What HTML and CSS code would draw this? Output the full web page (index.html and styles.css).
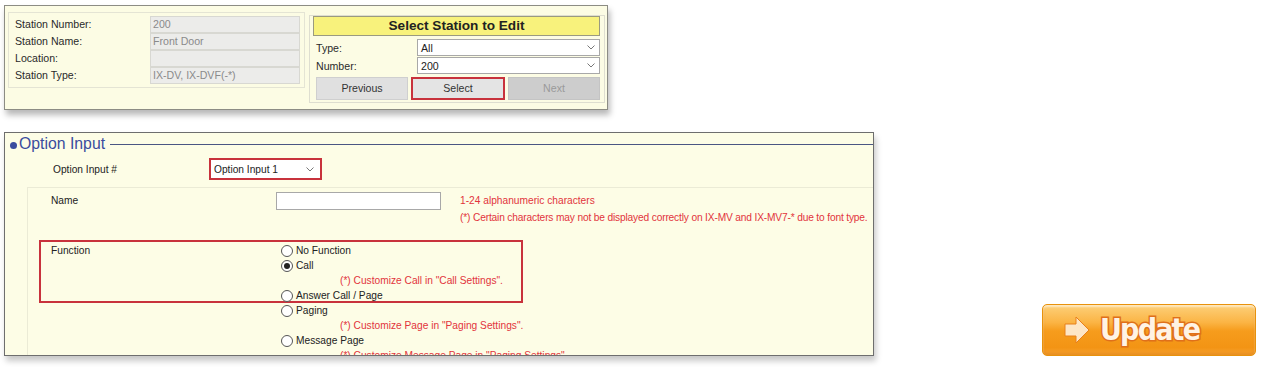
FILE: index.html
```html
<!DOCTYPE html>
<html lang="en">
<head>
<meta charset="utf-8">
<title>Option Input</title>
<link rel="stylesheet" href="styles.css">
</head>
<body>
<div class="page">
  <div class="left-col">
    <section class="station-panel">
      <div class="info-box">
        <div class="info-label">Station Number:</div><div class="info-field">200</div>
        <div class="info-label">Station Name:</div><div class="info-field">Front Door</div>
        <div class="info-label">Location:</div><div class="info-field"></div>
        <div class="info-label">Station Type:</div><div class="info-field">IX-DV, IX-DVF(-*)</div>
      </div>
      <div class="select-box">
        <div class="select-header">Select Station to Edit</div>
        <div class="sel-row first">
          <span class="sel-label">Type:</span>
          <div class="dropdown"><span>All</span><svg class="chev" viewBox="0 0 8 5"><polyline points="0.5,0.5 4,4 7.5,0.5"/></svg></div>
        </div>
        <div class="sel-row">
          <span class="sel-label">Number:</span>
          <div class="dropdown"><span>200</span><svg class="chev" viewBox="0 0 8 5"><polyline points="0.5,0.5 4,4 7.5,0.5"/></svg></div>
        </div>
        <div class="btn-row">
          <div class="btn">Previous</div>
          <div class="btn btn-active">Select</div>
          <div class="btn btn-disabled">Next</div>
        </div>
      </div>
    </section>

    <section class="option-panel">
      <div class="title-row">
        <span class="bullet"></span><span class="title-text">Option Input</span><span class="title-line"></span>
      </div>
      <div class="opt-row">
        <span class="opt-label">Option Input #</span>
        <div class="opt-select"><span>Option Input 1</span><svg class="chev" viewBox="0 0 8 5"><polyline points="0.5,0.5 4,4 7.5,0.5"/></svg></div>
      </div>
      <div class="inner-box">
        <div class="name-row">
          <span class="field-label">Name</span>
          <div class="text-input"></div>
          <div class="notes">
            <div>1-24 alphanumeric characters</div>
            <div class="note-long">(*) Certain characters may not be displayed correctly on IX-MV and IX-MV7-* due to font type.</div>
          </div>
        </div>
        <div class="function-box">
          <span class="fn-label">Function</span>
          <div class="radio-list">
            <div class="radio-item"><span class="radio"></span>No Function</div>
            <div class="radio-item"><span class="radio checked"></span>Call</div>
            <div class="radio-note">(*) Customize Call in "Call Settings".</div>
            <div class="radio-item"><span class="radio"></span>Answer Call / Page</div>
          </div>
        </div>
        <div class="radio-list more">
          <div class="radio-item"><span class="radio"></span>Paging</div>
          <div class="radio-note">(*) Customize Page in "Paging Settings".</div>
          <div class="radio-item"><span class="radio"></span>Message Page</div>
          <div class="radio-note">(*) Customize Message Page in "Paging Settings".</div>
        </div>
      </div>
    </section>
  </div>

  <div class="update-wrap">
    <div class="update-btn">
      <svg class="arrow" viewBox="0 0 28 28"><polygon points="2,8 13,8 13,1 26,14 13,27 13,20 2,20"/></svg>
      <span class="update-text">Update</span>
    </div>
  </div>
</div>
</body>
</html>
```

FILE: styles.css
```css
* { box-sizing: border-box; }
html, body { margin: 0; padding: 0; background: #ffffff; }
body {
  font-family: "Liberation Sans", Arial, sans-serif;
  font-size: 10.6px;
  color: #333;
  width: 1266px;
  height: 367px;
  overflow: hidden;
}
.page { display: flex; height: 367px; }
.left-col { display: flex; flex-direction: column; padding: 5px 0 0 4px; width: 880px; flex-shrink: 0; }

/* Station panel */
.station-panel {
  width: 604px;
  height: 105px;
  border: 1px solid #8c8c84;
  background: #fcfce4;
  box-shadow: 2px 5px 6px rgba(0,0,0,0.28);
  display: flex;
  align-items: flex-start;
  gap: 4px;
  padding: 6px 0 0 3px;
}
.info-box {
  width: 297px;
  height: 76px;
  border: 1px solid #e4e4d4;
  padding: 3px 4px 0 6px;
  display: grid;
  grid-template-columns: 135px 150px;
  grid-auto-rows: 17px;
}
.info-label { line-height: 17px; color: #2a2a2a; }
.info-field {
  background: #ececea;
  border: 1px solid #d8d8d2;
  color: #8a8a8a;
  line-height: 15px;
  padding-left: 2px;
}
.select-box {
  width: 296px;
  height: 88px;
  margin-top: 3px;
  border: 1px solid #deded0;
  padding: 0 4px 0 3px;
}
.select-header {
  height: 20px;
  border: 1px solid #9a9a80;
  background: #f8f27c;
  text-align: center;
  font-weight: bold;
  font-size: 13.6px;
  line-height: 18px;
  color: #222;
}
.sel-row { display: flex; align-items: center; height: 17px; margin-top: 1px; }
.sel-row.first { margin-top: 3px; }
.sel-label { width: 104px; padding-left: 3px; color: #2a2a2a; }
.dropdown {
  flex: 1;
  height: 17px;
  border: 1px solid #a8a8a8;
  background: #fff;
  display: flex;
  align-items: center;
  justify-content: space-between;
  padding: 0 4px 0 3px;
  color: #222;
}
.chev { width: 8px; height: 5px; }
.chev polyline { fill: none; stroke: #777; stroke-width: 1; }
.btn-row { display: flex; gap: 3px; margin: 3px 0 0 3px; }
.btn {
  flex: 1;
  height: 23px;
  background: #e0e0e0;
  border: 1px solid #cfcfcf;
  text-align: center;
  line-height: 21px;
  color: #333;
}
.btn-active { border: 2px solid #c8323c; line-height: 19px; background: #e4e4e4; }
.btn-disabled { background: #cdcdcd; color: #9a9a9a; border-color: #c4c4c4; }

/* Option panel */
.option-panel {
  margin-top: 22px;
  width: 870px;
  height: 224px;
  border: 1px solid #6e6e6e;
  background: #fdfde6;
  box-shadow: 2px 5px 6px rgba(0,0,0,0.22);
  overflow: hidden;
  padding: 0 0 0 5px;
  font-size: 10.2px;
}
.title-row { display: flex; align-items: center; height: 20px; margin-top: 1px; }
.bullet { width: 7px; height: 7px; border-radius: 50%; background: #3a4c9e; margin: 2px 2px 0 0; flex-shrink: 0; }
.title-text { font-size: 15.8px; color: #3a4c9e; line-height: 20px; }
.title-line { flex: 1; border-top: 1px solid #4a5683; margin-left: 5px; }
.opt-row { display: flex; align-items: center; margin-top: 4px; height: 22px; }
.opt-label { width: 199px; padding-left: 43px; color: #222; flex-shrink: 0; }
.opt-select {
  width: 113px;
  height: 22px;
  border: 2px solid #c8323c;
  background: #fff;
  display: flex;
  align-items: center;
  justify-content: space-between;
  padding: 0 6px 0 3px;
  color: #222;
}
.inner-box {
  margin: 7px 0 0 17px;
  border-top: 1px solid #ebebd6;
  border-left: 1px solid #ebebd6;
  height: 200px;
}
.name-row { display: flex; align-items: flex-start; padding-top: 4px; }
.field-label { width: 248px; flex-shrink: 0; padding-left: 23px; line-height: 18px; color: #222; }
.text-input { width: 165px; height: 18px; flex-shrink: 0; border: 1px solid #a8a8a8; background: #fff; }
.notes { margin-left: 19px; color: #e2343c; line-height: 17px; white-space: nowrap; }
.note-long { letter-spacing: -0.16px; }
.function-box {
  display: flex;
  align-items: flex-start;
  margin: 14px 0 0 11px;
  width: 484px;
  height: 63px;
  border: 2px solid #c8323c;
  padding: 1px 0 0 10px;
}
.fn-label { width: 230px; flex-shrink: 0; line-height: 15px; color: #222; }
.radio-list { display: flex; flex-direction: column; }
.radio-list.more { margin-left: 253px; }
.radio-item { display: flex; align-items: center; height: 15px; color: #222; white-space: nowrap; }
.radio {
  width: 12px;
  height: 12px;
  border: 1px solid #555;
  border-radius: 50%;
  background: #fff;
  margin-right: 3px;
  display: flex;
  align-items: center;
  justify-content: center;
  flex-shrink: 0;
}
.radio.checked::after { content: ""; width: 6px; height: 6px; border-radius: 50%; background: #222; }
.radio-note { height: 15px; line-height: 15px; padding-left: 59px; color: #e2343c; white-space: nowrap; }

/* Update button */
.update-wrap { flex: 1; display: flex; justify-content: flex-end; align-items: flex-end; padding: 0 10px 11px 0; }
.update-btn {
  width: 214px;
  height: 52px;
  border-radius: 5px;
  border: 1px solid #e8920c;
  background: linear-gradient(#fdd07a 0%, #fbb444 35%, #f69c1c 52%, #f39414 85%, #f6a232 100%);
  box-shadow: inset 0 2px 2px rgba(255,255,255,0.55), inset 0 -2px 3px rgba(200,100,0,0.3);
  display: flex;
  align-items: center;
  padding-left: 20px;
  gap: 9px;
}
.arrow { width: 28px; height: 28px; flex-shrink: 0; }
.arrow polygon { fill: #fde6c6; stroke: #e8801a; stroke-width: 1; }
.update-text {
  font-family: "DejaVu Sans Condensed", "DejaVu Sans", sans-serif;
  font-weight: bold;
  font-size: 30px;
  color: #fff3e4;
  -webkit-text-stroke: 3px #e0701a;
  paint-order: stroke fill;
  line-height: 40px;
  letter-spacing: -1.8px;
}
```
